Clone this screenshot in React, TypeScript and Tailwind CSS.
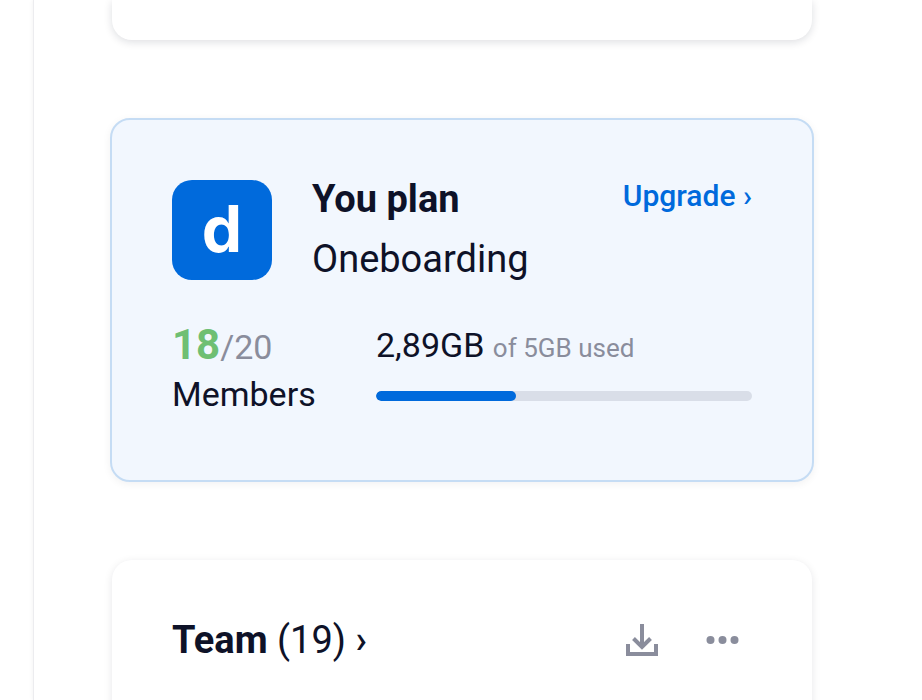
export default function App() {
  return (
    <div className="h-[700px] w-[922px] overflow-hidden bg-white font-['Roboto',sans-serif]">
      <div className="ml-[33px] h-full border-l border-[#ececef] pl-[78px] shadow-[-1px_0_4px_rgba(0,0,0,0.04),1px_0_4px_rgba(0,0,0,0.03)]">
        <div className="h-[40px] w-[700px] rounded-b-[20px] bg-white shadow-[0_2px_8px_rgba(14,18,40,0.14)]" />

        <div className="-ml-[2px] mt-[78px] h-[364px] w-[704px] rounded-[20px] border-2 border-[#c5dcf4] bg-[#f2f7fe] px-[60px] pt-[60px] shadow-[0_2px_8px_rgba(14,18,40,0.06)]">
          <div className="flex">
            <div className="flex h-[100px] w-[100px] shrink-0 items-center justify-center rounded-[20px] bg-[#006adc] pb-[2px] font-['Inter',sans-serif] text-[64px] font-bold leading-none text-white">
              d
            </div>
            <div className="ml-[40px] flex-1">
              <div className="flex items-start justify-between">
                <div className="mt-[-1px] text-[38px] font-bold leading-[40px] text-[#0e1228]">You plan</div>
                <div className="mt-[-2px] text-[30px] font-medium leading-[36px] text-[#006adc]">Upgrade ›</div>
              </div>
              <div className="mt-[20px] text-[38px] leading-[40px] text-[#0e1228]">Oneboarding</div>
            </div>
          </div>

          <div className="mt-[40px] flex">
            <div className="w-[204px]">
              <div className="flex items-baseline leading-[50px]">
                <span className="text-[42px] font-bold text-[#6fbf73]">18</span>
                <span className="text-[34px] text-[#8a8d9c]">/20</span>
              </div>
              <div className="mt-[2px] text-[34px] leading-[40px] text-[#0e1228]">Members</div>
            </div>
            <div className="flex-1">
              <div className="flex items-baseline leading-[50px]">
                <span className="text-[34px] text-[#0e1228]">2,89GB</span>
                <span className="ml-[8.5px] text-[26px] text-[#8a8d9c]">of 5GB used</span>
              </div>
              <div className="mt-[18px] h-[10px] w-full overflow-hidden rounded-full bg-[#d9dee8]">
                <div className="h-full w-[140px] rounded-full bg-[#006adc]" />
              </div>
            </div>
          </div>
        </div>

        <div className="mt-[78px] h-[200px] w-[700px] rounded-t-[20px] bg-white px-[60px] pt-[58px] shadow-[0_2px_8px_rgba(14,18,40,0.1)]">
          <div className="flex items-center justify-between">
            <div className="text-[38px] leading-[44px] text-[#0e1228]">
              <span className="font-bold">Team</span> (19) <span className="font-medium">›</span>
            </div>
            <div className="mr-[12px] flex items-center gap-[48px]">
              <svg width="32" height="32" viewBox="0 0 32 32" className="text-[#8a8d9c]" fill="none" stroke="currentColor" strokeWidth="4">
                <path d="M16 0V22" />
                <path d="M7.5 14.5L16 23L24.5 14.5" />
                <path d="M2 20V30H30V20" />
              </svg>
              <svg width="34" height="10" viewBox="0 0 34 10" className="text-[#8a8d9c]" fill="currentColor">
                <circle cx="4.5" cy="5" r="4" />
                <circle cx="16.5" cy="5" r="4" />
                <circle cx="28.5" cy="5" r="4" />
              </svg>
            </div>
          </div>
        </div>
      </div>
    </div>
  )
}
